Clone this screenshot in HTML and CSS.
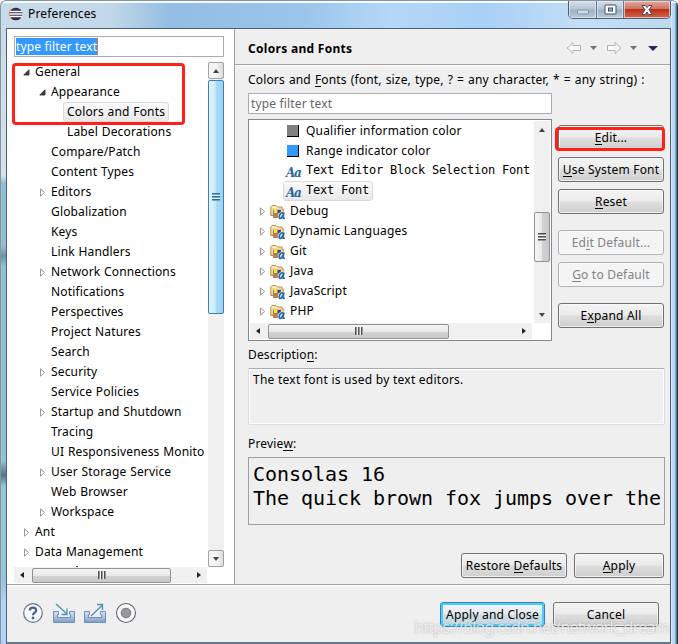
FILE: index.html
```html
<!DOCTYPE html>
<html lang="en">
<head>
<meta charset="utf-8">
<title>Preferences</title>
<link rel="stylesheet" href="styles.css">
</head>
<body>
<svg width="0" height="0" class="defs">
  <defs>
    <linearGradient id="tray" x1="0" y1="0" x2="0" y2="1"><stop offset="0" stop-color="#dbe5f2"/><stop offset="1" stop-color="#7d9cc8"/></linearGradient>
    <linearGradient id="fold" x1="0" y1="0" x2="0" y2="1"><stop offset="0" stop-color="#fdf3cf"/><stop offset="1" stop-color="#efc878"/></linearGradient>
    <symbol id="closed" viewBox="0 0 7 9"><path d="M1.5 .9 5.6 4.5 1.5 8.1Z" fill="#fff" stroke="#999"/></symbol>
    <symbol id="open" viewBox="0 0 7 7"><path d="M6 .8V6H.8Z" fill="#404040" stroke="#262626" stroke-width=".8"/></symbol>
    <symbol id="folder" viewBox="0 0 16 16">
      <path d="M.8 11.500V3L2 1.500H6L7.500 3H12V5H13.500L12.500 11.500Z" fill="url(#fold)" stroke="#c48b3f"/>
      <path d="M2 5.200H12" stroke="#e3b970" stroke-width=".8"/>
      <rect x="3" y="6" width="8" height="8" fill="#85878c"/>
      <rect x="4" y="6" width="3" height="3" fill="#ffe900"/><rect x="8" y="6" width="3" height="3" fill="#27478f"/><rect x="4" y="10.500" width="3" height="3" fill="#f36b18"/>
      <path d="M14 8.500 12.900 13.200Q12.700 14.800 14.900 14M13.600 9.800Q12.800 8.400 11.200 9 9.200 10.200 9.200 12.900 9.300 14.900 11.100 14.200 12.500 13.300 13.500 10.400" fill="none" stroke="#fff" stroke-width="2.800"/>
      <path d="M14 8.500 12.900 13.200Q12.700 14.800 14.900 14M13.600 9.800Q12.800 8.400 11.200 9 9.200 10.200 9.200 12.900 9.300 14.900 11.100 14.200 12.500 13.300 13.500 10.400" fill="none" stroke="#2566a4" stroke-width="1.700"/>
    </symbol>
  </defs>
</svg>
<div class="window">
  <header class="titlebar">
    <svg class="logo" width="15" height="14" viewBox="0 0 15 14"><circle cx="7" cy="7" r="6.3" fill="#ef982f"/><circle cx="8" cy="7" r="6.3" fill="#302b55"/><path d="M2 4.500H14M1.500 7H14.500M2 9.500H14" stroke="#fff" stroke-width="1.300"/></svg>
    <span class="caption">Preferences</span>
    <div class="controls">
      <span class="ctl min"><svg width="14" height="8" viewBox="0 0 14 8"><rect x="1.5" y="2" width="11" height="4" rx="1" fill="#d1dbe5" stroke="#8996a6"/></svg></span>
      <span class="ctl max"><svg width="13" height="12" viewBox="0 0 13 12"><rect x="1" y="1" width="11" height="9" rx="1" fill="#fff" stroke="#414c63"/><rect x="4.5" y="4" width="4" height="3" fill="#9fb3c9" stroke="#414c63"/></svg></span>
      <span class="ctl close"><svg width="14" height="12" viewBox="0 0 14 12"><path d="M2 1.500H5.300L7 3.600 8.700 1.500H12L9 5.800 12 10.500H8.700L7 8 5.300 10.500H2L5 5.800Z" fill="#fff" stroke="#4a4b5c"/></svg></span>
    </div>
  </header>

  <div class="client">
    <div class="panes">
      <nav class="nav">
        <div class="field nav-filter"><span class="selected">type filter text</span></div>
        <div class="nav-box">
          <div class="nav-tree">
            <div class="row d0"><svg class="tw"><use href="#open"/></svg><span>General</span></div>
            <div class="row d1"><svg class="tw"><use href="#open"/></svg><span>Appearance</span></div>
            <div class="row d2"><i class="tw"></i><span class="picked">Colors and Fonts</span></div>
            <div class="row d2"><i class="tw"></i><span>Label Decorations</span></div>
            <div class="row d1"><i class="tw"></i><span>Compare/Patch</span></div>
            <div class="row d1"><i class="tw"></i><span>Content Types</span></div>
            <div class="row d1"><svg class="tw"><use href="#closed"/></svg><span>Editors</span></div>
            <div class="row d1"><i class="tw"></i><span>Globalization</span></div>
            <div class="row d1"><i class="tw"></i><span>Keys</span></div>
            <div class="row d1"><i class="tw"></i><span>Link Handlers</span></div>
            <div class="row d1"><svg class="tw"><use href="#closed"/></svg><span>Network Connections</span></div>
            <div class="row d1"><i class="tw"></i><span>Notifications</span></div>
            <div class="row d1"><i class="tw"></i><span>Perspectives</span></div>
            <div class="row d1"><i class="tw"></i><span>Project Natures</span></div>
            <div class="row d1"><i class="tw"></i><span>Search</span></div>
            <div class="row d1"><svg class="tw"><use href="#closed"/></svg><span>Security</span></div>
            <div class="row d1"><i class="tw"></i><span>Service Policies</span></div>
            <div class="row d1"><svg class="tw"><use href="#closed"/></svg><span>Startup and Shutdown</span></div>
            <div class="row d1"><i class="tw"></i><span>Tracing</span></div>
            <div class="row d1"><i class="tw"></i><span>UI Responsiveness Monito</span></div>
            <div class="row d1"><svg class="tw"><use href="#closed"/></svg><span>User Storage Service</span></div>
            <div class="row d1"><i class="tw"></i><span>Web Browser</span></div>
            <div class="row d1"><svg class="tw"><use href="#closed"/></svg><span>Workspace</span></div>
            <div class="row d0"><svg class="tw"><use href="#closed"/></svg><span>Ant</span></div>
            <div class="row d0"><svg class="tw"><use href="#closed"/></svg><span>Data Management</span></div>
            <i class="next-row"></i>
          </div>
          <div class="vbar nav-v"><b class="btn-up framed"><i class="up"></i></b><b class="thumb blue"><i class="grip"></i></b><b class="btn-down framed"><i class="down"></i></b></div>
        </div>
        <div class="hbar nav-h"><i class="left"></i><b class="thumb"><i class="grip v"></i></b><i class="right"></i></div>
      </nav>

      <main class="page">
        <div class="page-head">
          <h1>Colors and Fonts</h1>
          <svg width="94" height="14" viewBox="0 0 94 14">
            <path d="M1 7 7 1.500V4.500H14.500V9.500H7V12.500Z" fill="#f7f7f7" stroke="#b2b2b2"/>
            <path d="M24 5H31L27.500 9Z" fill="#70717a"/>
            <path d="M55 7 49 1.500V4.500H41.500V9.500H49V12.500Z" fill="#f7f7f7" stroke="#b2b2b2"/>
            <path d="M64 5H71L67.500 9Z" fill="#70717a"/>
            <path d="M82 5H92L87 10Z" fill="#33204f"/>
          </svg>
        </div>
        <div class="page-body">
          <div class="label hint">Colors and <u>F</u>onts (font, size, type, ? = any character, * = any string) :</div>
          <div class="field font-filter">type filter text</div>
          <div class="fonts">
            <div class="list">
              <div class="list-top">
                <div class="items">
                  <div class="item leaf"><i class="swatch gray"></i><span>Qualifier information color</span></div>
                  <div class="item leaf"><i class="swatch azure"></i><span>Range indicator color</span></div>
                  <div class="item leaf mono"><em class="aa">Aa</em><span>Text Editor Block Selection Font</span></div>
                  <div class="item leaf mono"><div class="chosen"><em class="aa">Aa</em><span>Text Font</span></div></div>
                  <div class="item"><svg class="tw"><use href="#closed"/></svg><svg class="folder"><use href="#folder"/></svg><span>Debug</span></div>
                  <div class="item"><svg class="tw"><use href="#closed"/></svg><svg class="folder"><use href="#folder"/></svg><span>Dynamic Languages</span></div>
                  <div class="item"><svg class="tw"><use href="#closed"/></svg><svg class="folder"><use href="#folder"/></svg><span>Git</span></div>
                  <div class="item"><svg class="tw"><use href="#closed"/></svg><svg class="folder"><use href="#folder"/></svg><span>Java</span></div>
                  <div class="item"><svg class="tw"><use href="#closed"/></svg><svg class="folder"><use href="#folder"/></svg><span>JavaScript</span></div>
                  <div class="item"><svg class="tw"><use href="#closed"/></svg><svg class="folder"><use href="#folder"/></svg><span>PHP</span></div>
                </div>
                <div class="vbar list-v"><b class="btn-up"><i class="up"></i></b><b class="thumb side"><i class="grip"></i></b><b class="btn-down"><i class="down"></i></b></div>
              </div>
              <div class="hbar list-h"><i class="left"></i><b class="thumb"><i class="grip v"></i></b><i class="right"></i></div>
            </div>
            <div class="actions">
              <button class="button"><span><u>E</u>dit...</span></button>
              <button class="button"><span><u>U</u>se System Font</span></button>
              <button class="button"><span><u>R</u>eset</span></button>
              <button class="button off gap"><span>Ed<u>i</u>t Default...</span></button>
              <button class="button off"><span><u>G</u>o to Default</span></button>
              <button class="button gap"><span>E<u>x</u>pand All</span></button>
            </div>
          </div>
          <div class="label desc-label">Descriptio<u>n</u>:</div>
          <div class="desc">The text font is used by text editors.</div>
          <div class="label prev-label">Previe<u>w</u>:</div>
          <div class="preview">Consolas 16<br>The quick brown fox jumps over the</div>
          <div class="page-buttons"><button class="button wide"><span>Restore <u>D</u>efaults</span></button><button class="button apply"><span><u>A</u>pply</span></button></div>
        </div>
      </main>
    </div>
    <footer class="footer">
      <div class="tools">
        <svg width="22" height="22" viewBox="0 0 22 22"><circle cx="11" cy="11" r="9.300" fill="#f7f9fc" stroke="#65738f" stroke-width="1.200"/><path d="M7.700 8.500Q7.800 5.700 11 5.700 14.200 5.700 14.200 8.400 14.200 9.800 12.600 10.800 11 11.800 11 13.300" fill="none" stroke="#49618b" stroke-width="2.200"/><circle cx="11" cy="16" r="1.400" fill="#49618b"/></svg>
        <svg width="22" height="22" viewBox="0 0 22 22"><path d="M.5 9.500H5.500V12.500H4.500V15.500H17.500V12.500H16.500V9.500H21.500V20.500H.5Z" fill="url(#tray)" stroke="#6f8fbf"/><path d="M3 2 14 12M14 6.500V12.500H8.500" fill="none" stroke="#4d91b7" stroke-width="1.300"/></svg>
        <svg width="22" height="22" viewBox="0 0 22 22"><path d="M.5 9.500H5.500V12.500H4.500V15.500H17.500V12.500H16.500V9.500H21.500V20.500H.5Z" fill="url(#tray)" stroke="#6f8fbf"/><path d="M7 14 18.500 3M13 2.500H18.500V8" fill="none" stroke="#4d91b7" stroke-width="1.300"/></svg>
        <svg width="22" height="22" viewBox="0 0 22 22"><circle cx="11" cy="11" r="9.500" fill="#f8f8f8" stroke="#5c6674" stroke-width="1.100"/><circle cx="11" cy="11" r="4.800" fill="#999" stroke="#777"/></svg>
      </div>
      <button class="button primary"><span>Apply and Close</span></button>
      <button class="button cancel"><span>Cancel</span></button>
    </footer>
  </div>
  <div class="mark mark-nav"></div>
  <div class="mark mark-edit"></div>
  <div class="watermark">https://blog.csdn.net/network_dream</div>
</div>
</body>
</html>
```
FILE: styles.css
```css
* { box-sizing: border-box; }
body { margin: 0; font: 12px/20px "Noto Sans", sans-serif; letter-spacing: .15px; color: #000; overflow: hidden; }
.defs { position: absolute; }
svg { display: block; flex: none; }
i, em { font-style: normal; }
u { text-decoration: none; border-bottom: 1px solid currentColor; display: inline-block; line-height: 13px; }

.window {
  position: relative; width: 678px; height: 644px; overflow: hidden;
  display: flex; flex-direction: column;
  border: solid #8a939c; border-width: 1px 0 0 1px; border-radius: 6px 6px 0 0;
  background:
    linear-gradient(#f4fbff, #f4fbff) 0 0 / 100% 2px no-repeat,
    linear-gradient(90deg, transparent 670px, #d3e9fa 670px 671px, #b4d3ef 672px 674px, #76b7dc 674px 675px, #2b333c 676px) no-repeat,
    linear-gradient(90deg, #c8dbea 0, #c2d7e9 110px, #93bde2 170px, #9ac4ea 300px, #b5d8f7 390px, #a8cff5 480px, #c3def6 580px, #bdd9ef 100%) 0 0 / 100% 28px no-repeat,
    linear-gradient(#c7dceb 28px, #d5e3eb 175px, #90bfd1 182px 245px, #6b93a3 255px, #90c2d4 265px 460px, #527487 474px, #96c5d8 485px 580px, #b1d3f5 600px);
}
.titlebar { flex: none; height: 27px; display: flex; align-items: flex-start; padding-left: 7px; }
.logo { margin-top: 6px; }
.caption { flex: 1; margin: 3px 0 0 5px; }
.controls { display: flex; width: 103px; height: 18px; margin-right: 7px; border: 1px solid #505d6e; border-top: 0; border-radius: 0 0 5px 5px; overflow: hidden; }
.ctl { display: flex; justify-content: center; align-items: center; background: linear-gradient(#d3dfe9, #b5c5d6 48%, #9bb0c6 52%, #b7cbdc); box-shadow: inset 0 0 0 1px #e4edf5aa; }
.min { width: 28px; padding-top: 5px; border-right: 1px solid #66758a; }
.max { width: 27px; border-right: 1px solid #66758a; }
.close { flex: 1; background: linear-gradient(#e5a898, #d37363 45%, #bb2f19 50%, #d2664b); }

.client { width: 665px; height: 616px; margin-left: 5px; display: flex; flex-direction: column; border: 1px solid #505e74; border-bottom: 2px solid #66788f; background: #efefef; }
.panes { height: 556px; display: flex; border-bottom: 1px solid #a0a0a0; }
.nav { width: 228px; padding: 7px 10px 0 7px; background: #fff; border-right: 1px solid #a0a0a0; }
.field { background: #fff; border: 1px solid #abadb3; line-height: 19px; padding: 0 2px; height: 21px; white-space: nowrap; }
.nav-filter { padding-left: 1px; }
.nav-filter .selected { display: inline-block; height: 17px; line-height: 17px; background: #3399ff; color: #fff; border-right: 1px solid #d1852b; }
.nav-box { display: flex; height: 505px; margin-top: 5px; }
.nav-tree { width: 192px; margin-right: 2px; overflow: hidden; }
.row { display: flex; align-items: center; height: 20px; white-space: nowrap; }
.row > span { word-spacing: .5px; }
.tw { width: 7px; height: 9px; flex: none; margin-right: 5px; overflow: visible; }
.d0 { padding-left: 9px; } .d1 { padding-left: 25px; } .d2 { padding-left: 41px; }
.picked { height: 20px; line-height: 18px; padding: 0 3px; margin-left: -4px; border: 1px solid #d9d9d9; border-radius: 3px; background: linear-gradient(#fafafa, #e8e8e8); }
.next-row { display: block; width: 2px; height: 1px; margin: 4px 0 0 62px; background: #333; }

.vbar { display: flex; flex-direction: column; background: #f0f0f0; }
.vbar b, .hbar b { display: flex; align-items: center; justify-content: center; }
.nav-v { width: 16px; }
.btn-up, .btn-down { height: 17px; flex: none; }
.framed { border: 1px solid #a2a2a2; border-radius: 2px; background: linear-gradient(90deg, #f5f5f5 50%, #dcdcdc); }
.btn-down { margin-top: auto; }
.thumb { border: 1px solid #929292; border-radius: 2px; background: linear-gradient(#f5f5f5, #e8e8e8 50%, #d2d2d3 52%, #c8c8ca); }
.thumb.side { background: linear-gradient(90deg, #f5f5f5, #e8e8e8 50%, #d2d2d3 52%, #c8c8ca); }
.thumb.blue { height: 234px; margin-top: 1px; border-color: #3c7fb1; background: linear-gradient(90deg, #e3f4fd, #c9ebfc 45%, #a9dbf5 50%, #9dd1ee); }
.grip { width: 8px; height: 8px; background: repeating-linear-gradient(#515151 0 1px, #999 1px 2px, #f0f0f0 2px 3px); }
.blue .grip { background: repeating-linear-gradient(#286b94 0 1px, #6fa9c9 1px 2px, #dff4ff 2px 3px); }
.grip.v { background: repeating-linear-gradient(90deg, #515151 0 1px, #999 1px 2px, #f0f0f0 2px 3px); }
.up, .down { width: 0; height: 0; border: 3.5px solid transparent; }
.up { border-top: 0; border-bottom: 4px solid #444; } .down { border-bottom: 0; border-top: 4px solid #444; }
.hbar { display: flex; align-items: center; background: #f0f0f0; }
.left, .right { width: 0; height: 0; flex: none; border: 3.5px solid transparent; }
.left { border-left: 0; border-right: 4px solid #222; } .right { border-right: 0; border-left: 4px solid #222; margin-left: auto; }
.nav-h { width: 193px; height: 16px; margin-top: 0; padding: 0 6px; }
.nav-h .thumb { width: 139px; height: 15px; margin-left: 8px; }

.page { flex: 1; min-width: 0; }
.page-head { height: 36px; display: flex; align-items: center; justify-content: space-between; padding: 2px 10px 0 13px; border-bottom: 1px solid #a0a0a0; box-shadow: 0 1px #fff; }
h1 { margin: 2px 0 0; font-size: 12px; line-height: 20px; font-weight: 700; letter-spacing: .3px; }
.page-body { padding: 5px 5px 0 13px; }
.label { height: 20px; white-space: nowrap; }
.hint { letter-spacing: .16px; word-spacing: .75px; }
.font-filter { width: 304px; margin-top: 3px; color: #666; }
.fonts { display: flex; margin-top: 5px; }
.list { width: 304px; height: 222px; margin-right: 6px; border: 1px solid #828790; background: #fff; padding: 1px; }
.list-top { display: flex; height: 202px; }
.items { width: 283px; overflow: hidden; letter-spacing: .2px; }
.item { display: flex; align-items: center; height: 20px; padding-left: 9px; white-space: nowrap; }
.item .tw { margin-right: 4px; }
.folder { width: 16px; height: 16px; margin: 1px 4px 0 0; }
.item.leaf { padding-left: 37px; }
.swatch { width: 12px; height: 12px; margin-right: 7px; border: solid #000; border-width: 0 1px 1px 0; }
.gray { background: #808080; } .azure { background: #3399ff; }
.aa { width: 20px; margin-left: -1px; font: italic bold 12px/17px "DejaVu Serif", serif; letter-spacing: -1.2px; color: #29679c; padding-top: 4px; height: 20px; }
.mono span { font: 12px/16px "DejaVu Sans Mono", monospace; letter-spacing: -.224px; margin-top: -3px; }
.chosen { display: flex; align-items: center; width: 90px; height: 20px; margin-left: -4px; padding-left: 3px; border: 1px solid #d9d9d9; border-radius: 3px; background: linear-gradient(#fafafa, #e8e8e8); }
.list-v { width: 16px; margin-left: auto; }
.list-v .thumb { height: 50px; margin-top: 74px; }
.list-h { height: 16px; width: 282px; padding: 0 6px; }
.list-h .thumb { width: 181px; height: 15px; margin-left: 8px; }

.actions { width: 106px; padding-top: 6px; }
.button { display: flex; align-items: center; justify-content: center; width: 106px; height: 25px; padding: 0; margin: 0 0 7px; font: inherit; letter-spacing: .2px; color: #000; white-space: nowrap; border: 1px solid #707070; border-radius: 3px; background: linear-gradient(#f4f4f4, #ebebeb 48%, #dddddd 52%, #cfcfcf); box-shadow: inset 0 0 0 1px #fafafac0; }
.button.off { border-color: #adb2b5; color: #838383; background: #f4f4f4; }
.button.gap { margin-top: 16px; }
.desc-label { margin-top: 4px; }
.desc { height: 57px; width: 417px; margin-top: 3px; padding: 1px 4px; border: 1px solid #d9dce3; border-top-color: #a9abb3; border-radius: 2px; box-shadow: inset 0 0 0 1px #fff; letter-spacing: .25px; }
.prev-label { margin-top: 9px; }
.preview { height: 68px; width: 417px; margin-top: 3px; padding: 4px 4px; border: 1px solid #a0a0a0; font: 20px/24px "DejaVu Sans Mono", monospace; letter-spacing: -.04px; white-space: nowrap; overflow: hidden; }
.page-buttons { display: flex; gap: 7px; margin-top: 28px; padding-left: 213px; }
.page-buttons .apply { width: 90px; }

.footer { flex: 1; display: flex; padding-top: 16px; border-top: 1px solid #fff; }
.tools { display: flex; gap: 9px; width: 433px; padding-left: 15px; }
.primary { width: 105px; border-color: #3c7fb1; background: linear-gradient(#f2f6f9, #e3e9ed 48%, #d2dde3 52%, #bdd8e4); box-shadow: inset 0 0 0 2px #46d0fb; }
.cancel { margin-left: 8px; }

.mark { position: absolute; border: 3px solid #ff2018; border-radius: 4px; }
.mark-nav { left: 11px; top: 62px; width: 173px; height: 62px; }
.mark-edit { left: 554px; top: 126px; width: 110px; height: 24px; }
.watermark { position: absolute; left: 413px; top: 615px; font: 16px/22px "Noto Sans", sans-serif; letter-spacing: -.75px; color: #ffffffb0; text-shadow: 0 0 2px #77777790; white-space: nowrap; }
```
